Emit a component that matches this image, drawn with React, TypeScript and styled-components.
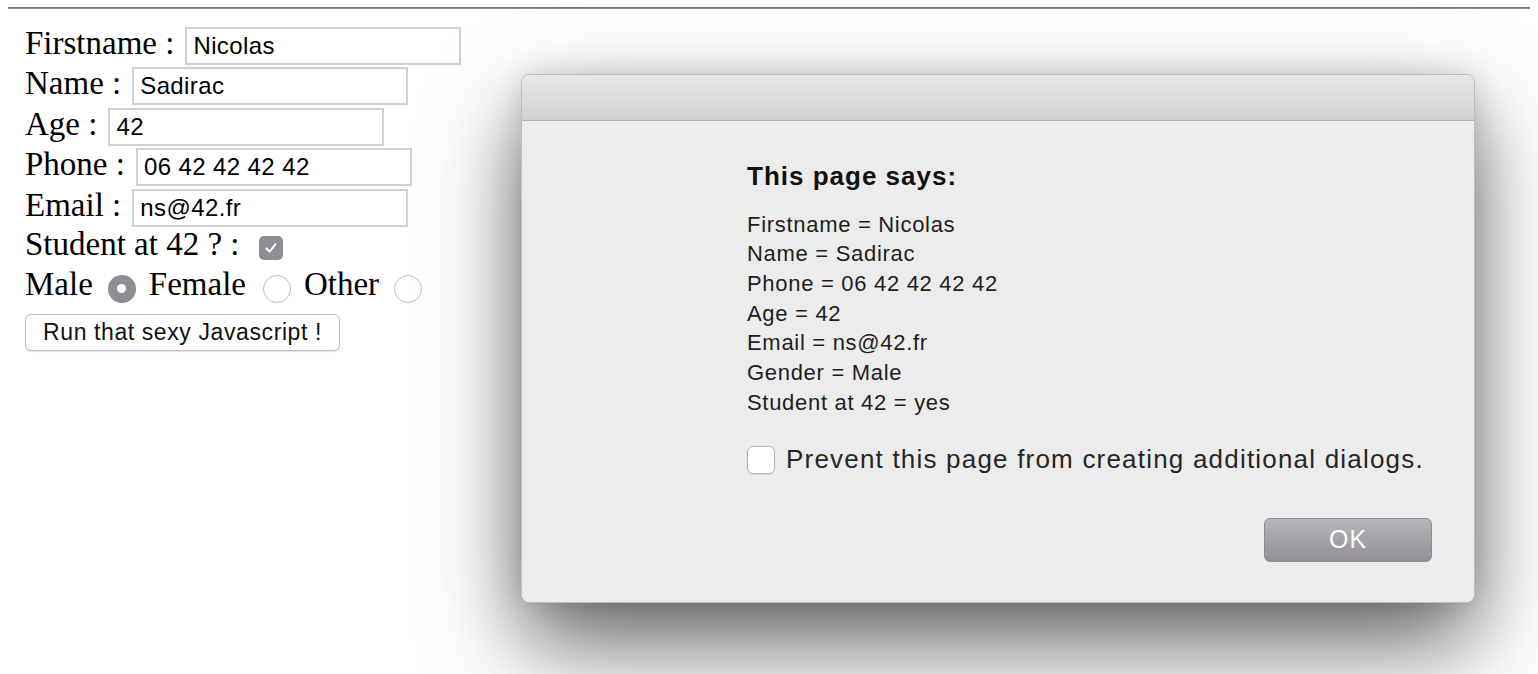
import React from "react";
import styled, { createGlobalStyle } from "styled-components";

const GlobalStyle = createGlobalStyle`
  html, body {
    margin: 0;
    background: #fff;
  }
  body {
    font-family: "Liberation Serif", "Times New Roman", serif;
  }
`;

const Page = styled.div`
  position: relative;
  min-height: 674px;
  padding: 7px 8px 0;
  box-sizing: border-box;
  overflow: hidden;
`;

const Rule = styled.div`
  height: 2px;
  background: linear-gradient(#6a6a6a, #9c9c9c);
`;

const Form = styled.form`
  margin: 13.9px 0 0 17px;
  font-size: 33px;
  color: #000;
`;

const Row = styled.div<{ $h?: number }>`
  height: ${(p) => p.$h ?? 40.5}px;
  line-height: ${(p) => p.$h ?? 40.5}px;
  white-space: nowrap;
`;

const TextField = styled.input`
  display: inline-block;
  vertical-align: baseline;
  box-sizing: border-box;
  width: 276px;
  height: 38px;
  margin: 0 0 0 11px;
  padding: 0 6px;
  border: 2px solid #d0d0d0;
  background: #fff;
  color: #000;
  font: 24px "Liberation Sans", Arial, sans-serif;
  letter-spacing: 0.4px;
  outline: none;
`;

/* inline-block with only block children: its baseline is the bottom edge */
const CheckBox = styled.span`
  display: inline-block;
  width: 24px;
  height: 24px;
  margin-left: 20px;
  border-radius: 5px;
  background: #8f8e94;
  vertical-align: -5px;

  svg {
    display: block;
    margin: 5px;
  }
`;

const Radio = styled.span<{ $checked?: boolean; $before: number; $after?: number }>`
  display: inline-block;
  box-sizing: border-box;
  width: 28px;
  height: 28px;
  margin: 0 ${(p) => p.$after ?? 0}px 0 ${(p) => p.$before}px;
  border-radius: 50%;
  border: ${(p) => (p.$checked ? "none" : "1.5px solid #bcbcbc")};
  background: ${(p) => (p.$checked ? "#8f8e94" : "#fff")};
  vertical-align: -8px;

  &::after {
    content: "";
    display: ${(p) => (p.$checked ? "block" : "none")};
    width: 9px;
    height: 9px;
    margin: 9.5px auto 0;
    border-radius: 50%;
    background: #fff;
  }
`;

const ButtonRow = styled.div`
  margin-top: 6.6px;
`;

const RunButton = styled.button`
  box-sizing: border-box;
  width: 315px;
  height: 37px;
  padding: 0;
  border: 1px solid #bdbdbd;
  border-radius: 6px;
  background: #fff;
  box-shadow: 0 1px 1px rgba(0, 0, 0, 0.12);
  color: #111;
  font: 23px "Liberation Sans", Arial, sans-serif;
  letter-spacing: 0.6px;
`;

const Dialog = styled.div`
  position: absolute;
  left: 521px;
  top: 74px;
  width: 954px;
  box-sizing: border-box;
  border: 1px solid #bdbdbd;
  border-radius: 8px;
  background: #ececec;
  box-shadow: 0 40px 90px rgba(0, 0, 0, 0.62), 0 0 30px rgba(0, 0, 0, 0.12);
  overflow: hidden;
  font-family: "Liberation Sans", Arial, sans-serif;
`;

const TitleBar = styled.div`
  height: 45px;
  border-bottom: 1px solid #b4b4b4;
  background: linear-gradient(#e7e6e9, #d2d1d4);
`;

const DialogBody = styled.div`
  padding: 40px 42px 40px 225px;
`;

const DialogTitle = styled.h1`
  margin: 0;
  font-size: 26px;
  line-height: 30px;
  font-weight: 700;
  letter-spacing: 1px;
  color: #111;
`;

const Message = styled.div`
  margin-top: 18.5px;
  font-size: 22px;
  line-height: 29.7px;
  letter-spacing: 0.7px;
  color: #1e1e1e;
`;

const PreventRow = styled.label`
  display: flex;
  align-items: center;
  gap: 11px;
  height: 28px;
  margin-top: 28.5px;
  font-size: 26px;
  letter-spacing: 1.2px;
  color: #262626;
  white-space: nowrap;
`;

const PreventBox = styled.span`
  flex: none;
  width: 28px;
  height: 28px;
  box-sizing: border-box;
  border: 1px solid #b3b3b3;
  border-radius: 6px;
  background: #fff;
  box-shadow: 0 1px 1px rgba(0, 0, 0, 0.08);
`;

const Footer = styled.div`
  display: flex;
  justify-content: flex-end;
  margin-top: 44px;
`;

const OkButton = styled.button`
  box-sizing: border-box;
  width: 168px;
  height: 44px;
  padding: 0;
  border: 1px solid #8d8c91;
  border-radius: 6px;
  background: linear-gradient(#b6b5ba, #918f95);
  color: #fff;
  font: 25px "Liberation Sans", Arial, sans-serif;
  letter-spacing: 1px;
`;

const fields = [
  { label: "Firstname :", value: "Nicolas" },
  { label: "Name :", value: "Sadirac" },
  { label: "Age :", value: "42" },
  { label: "Phone :", value: "06 42 42 42 42" },
  { label: "Email :", value: "ns@42.fr" },
];

const lines = [
  "Firstname = Nicolas",
  "Name = Sadirac",
  "Phone = 06 42 42 42 42",
  "Age = 42",
  "Email = ns@42.fr",
  "Gender = Male",
  "Student at 42 = yes",
];

const App: React.FC = () => {
  return (
    <Page>
      <GlobalStyle />
      <Rule />
      <Form onSubmit={(e) => e.preventDefault()}>
        {fields.map((f) => (
          <Row key={f.label}>
            {f.label}
            <TextField value={f.value} readOnly />
          </Row>
        ))}
        <Row $h={38.5}>
          Student at 42 ? :
          <CheckBox>
            <svg width="14" height="14" viewBox="0 0 14 14">
              <path
                d="M2.5 7.5 L5.6 10.6 L11.5 3.2"
                fill="none"
                stroke="#fff"
                strokeWidth="2"
                strokeLinecap="round"
                strokeLinejoin="round"
              />
            </svg>
          </CheckBox>
        </Row>
        <Row>
          Male
          <Radio $checked $before={15} $after={13} />
          Female
          <Radio $before={17} $after={13} />
          Other
          <Radio $before={15} />
        </Row>
        <ButtonRow>
          <RunButton type="button">Run that sexy Javascript !</RunButton>
        </ButtonRow>
      </Form>

      <Dialog>
        <TitleBar />
        <DialogBody>
          <DialogTitle>This page says:</DialogTitle>
          <Message>
            {lines.map((l) => (
              <div key={l}>{l}</div>
            ))}
          </Message>
          <PreventRow>
            <PreventBox />
            Prevent this page from creating additional dialogs.
          </PreventRow>
          <Footer>
            <OkButton type="button">OK</OkButton>
          </Footer>
        </DialogBody>
      </Dialog>
    </Page>
  );
};

export default App;
